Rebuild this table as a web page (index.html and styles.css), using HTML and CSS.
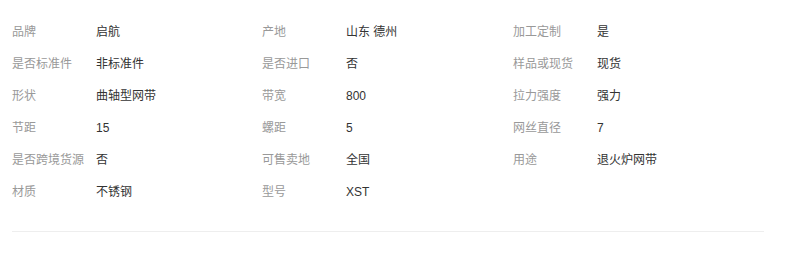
FILE: index.html
```html
<html>
<head>
<meta charset="utf-8">
<title>商品属性</title>
<meta name="viewport" content="width=device-width, initial-scale=1">
<link rel="stylesheet" href="styles.css">
</head>
<body>

<div class="attrs">
	<div class="grid">
		<div class="item"><span class="label">品牌</span><span class="value">启航</span></div>
		<div class="item"><span class="label">产地</span><span class="value">山东 德州</span></div>
		<div class="item"><span class="label">加工定制</span><span class="value">是</span></div>

		<div class="item"><span class="label">是否标准件</span><span class="value">非标准件</span></div>
		<div class="item"><span class="label">是否进口</span><span class="value">否</span></div>
		<div class="item"><span class="label">样品或现货</span><span class="value">现货</span></div>

		<div class="item"><span class="label">形状</span><span class="value">曲轴型网带</span></div>
		<div class="item"><span class="label">带宽</span><span class="value">800</span></div>
		<div class="item"><span class="label">拉力强度</span><span class="value">强力</span></div>

		<div class="item"><span class="label">节距</span><span class="value">15</span></div>
		<div class="item"><span class="label">螺距</span><span class="value">5</span></div>
		<div class="item"><span class="label">网丝直径</span><span class="value">7</span></div>

		<div class="item"><span class="label">是否跨境货源</span><span class="value">否</span></div>
		<div class="item"><span class="label">可售卖地</span><span class="value">全国</span></div>
		<div class="item"><span class="label">用途</span><span class="value">退火炉网带</span></div>

		<div class="item"><span class="label">材质</span><span class="value">不锈钢</span></div>
		<div class="item"><span class="label">型号</span><span class="value">XST</span></div>
	</div>
</div>

</body>
</html>
```

FILE: styles.css
```css
body{
	margin: 0;
	background: #fff;
	font-family: "Liberation Sans", "Noto Sans CJK SC", sans-serif;
	font-size: 12px;
}

.attrs{
	width: 752px;
	margin-left: 12px;
	padding: 16px 0 23px;
	border-bottom: 1px solid #eee;
}

.grid{
	display: grid;
	grid-template-columns: 250px 251px 251px;
}

.item{
	display: flex;
	height: 32px;
	line-height: 32px;
	white-space: nowrap;
}

.label{
	width: 84px;
	color: #999;
}

.value{
	color: #333;
}
```
